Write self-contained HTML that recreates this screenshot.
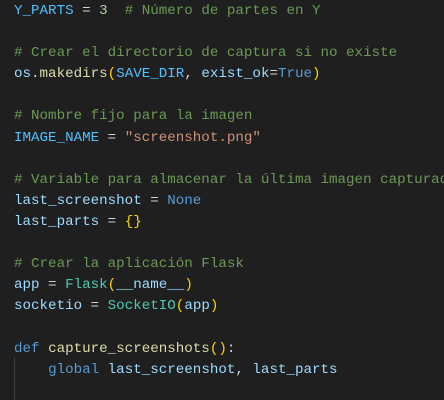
<!DOCTYPE html>
<html><head><meta charset="utf-8"><style>
html,body{margin:0;padding:0;background:#1f1f1f;width:444px;height:400px;overflow:hidden}
pre{margin:0;position:absolute;left:14px;top:1px;font-family:"Liberation Mono",monospace;font-size:14.2px;line-height:21.1px;color:#d4d4d4;white-space:pre}
.c{color:#6a9955}.v{color:#9cdcfe}.k{color:#4fc1ff}.n{color:#b5cea8}.s{color:#ce9178}.b{color:#569cd6}.f{color:#dcdcaa}.t{color:#4ec9b0}.y{color:#ffd700}
.g{position:absolute;left:14px;top:357px;width:1px;height:43px;background:#404040}
</style></head><body>
<div class="g"></div>
<pre><span class="k">Y_PARTS</span> = <span class="n">3</span>  <span class="c"># Número de partes en Y</span>

<span class="c"># Crear el directorio de captura si no existe</span>
<span class="v">os</span>.<span class="f">makedirs</span><span class="y">(</span><span class="k">SAVE_DIR</span>, <span class="v">exist_ok</span>=<span class="b">True</span><span class="y">)</span>

<span class="c"># Nombre fijo para la imagen</span>
<span class="k">IMAGE_NAME</span> = <span class="s">"screenshot.png"</span>

<span class="c"># Variable para almacenar la última imagen capturada</span>
<span class="v">last_screenshot</span> = <span class="b">None</span>
<span class="v">last_parts</span> = <span class="y">{}</span>

<span class="c"># Crear la aplicación Flask</span>
<span class="v">app</span> = <span class="t">Flask</span><span class="y">(</span><span class="v">__name__</span><span class="y">)</span>
<span class="v">socketio</span> = <span class="t">SocketIO</span><span class="y">(</span><span class="v">app</span><span class="y">)</span>

<span class="b">def</span> <span class="f">capture_screenshots</span><span class="y">()</span>:
    <span class="b">global</span> <span class="v">last_screenshot</span>, <span class="v">last_parts</span>
</pre>
</body></html>
